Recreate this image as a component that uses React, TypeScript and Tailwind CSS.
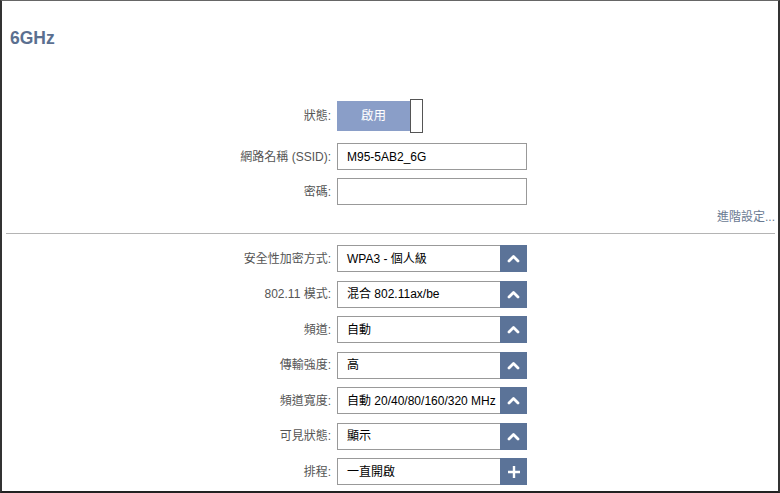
import React from 'react';

const font = { fontFamily: '"Liberation Sans", Arial, "Noto Sans CJK TC", sans-serif' };

interface SelectRow {
  label: string;
  value: string;
  plus?: boolean;
}

const selects: SelectRow[] = [
  { label: '安全性加密方式:', value: 'WPA3 - 個人級' },
  { label: '802.11 模式:', value: '混合 802.11ax/be' },
  { label: '頻道:', value: '自動' },
  { label: '傳輸強度:', value: '高' },
  { label: '頻道寬度:', value: '自動 20/40/80/160/320 MHz' },
  { label: '可見狀態:', value: '顯示' },
  { label: '排程:', value: '一直開啟', plus: true },
];

const Label: React.FC<{ children: React.ReactNode }> = ({ children }) => (
  <div className="w-[329px] text-right text-[12px] text-[#555]">{children}</div>
);

const ChevronUp = () => (
  <svg width="13" height="9" viewBox="0 0 13 9" fill="none">
    <path d="M2 7 L6.5 2.5 L11 7" stroke="white" strokeWidth="2.8" strokeLinecap="round" strokeLinejoin="round" />
  </svg>
);

const Plus = () => (
  <svg width="14" height="14" viewBox="0 0 14 14" fill="none">
    <path d="M7 1 V13 M1 7 H13" stroke="white" strokeWidth="2.4" />
  </svg>
);

const App: React.FC = () => {
  return (
    <div
      className="w-[780px] h-[493px] bg-white border-t border-t-[#666] border-x-2 border-x-[#333] border-b-2 border-b-[#222] overflow-hidden flex flex-col"
      style={font}
    >
      <h1 className="pl-[8px] pt-[25px] text-[17.5px] leading-[24px] font-bold text-[#5b6f90]">6GHz</h1>

      <div className="mt-[49px] flex items-center gap-[6px] h-[34px]">
        <Label>狀態:</Label>
        <div className="flex items-center">
          <div className="w-[73px] h-[30px] bg-[#8a9ec8] flex items-center justify-center text-white text-[12.5px]">
            啟用
          </div>
          <div className="w-[13px] h-[34px] bg-white border border-[#555]" />
        </div>
      </div>

      <div className="mt-[10px] flex flex-col gap-[8px]">
        <div className="flex items-center gap-[6px]">
          <Label>網路名稱 (SSID):</Label>
          <div className="w-[190px] h-[27px] border border-[#999] flex items-center px-[9px] text-[12px] text-black">
            M95-5AB2_6G
          </div>
        </div>
        <div className="flex items-center gap-[6px]">
          <Label>密碼:</Label>
          <div className="w-[190px] h-[27px] border border-[#999]" />
        </div>
      </div>

      <div className="mt-[4px] pr-[3px] text-right text-[12px] leading-[16px] text-[#6a7a92]">進階設定...</div>

      <div className="mt-[8px] ml-[4px] mr-[3px] h-px bg-[#b4b4b4]" />

      <div className="mt-[11px] flex flex-col gap-[8.5px]">
        {selects.map((s) => (
          <div key={s.label} className="flex items-center gap-[6px]">
            <Label>{s.label}</Label>
            <div className="flex h-[27px]">
              <div className="w-[163px] border border-[#999] border-r-0 flex items-center pl-[9px] text-[12px] text-black whitespace-nowrap overflow-hidden">
                {s.value}
              </div>
              <div className="w-[27px] bg-[#5b7398] flex items-center justify-center">
                {s.plus ? <Plus /> : <ChevronUp />}
              </div>
            </div>
          </div>
        ))}
      </div>
    </div>
  );
};

export default App;
